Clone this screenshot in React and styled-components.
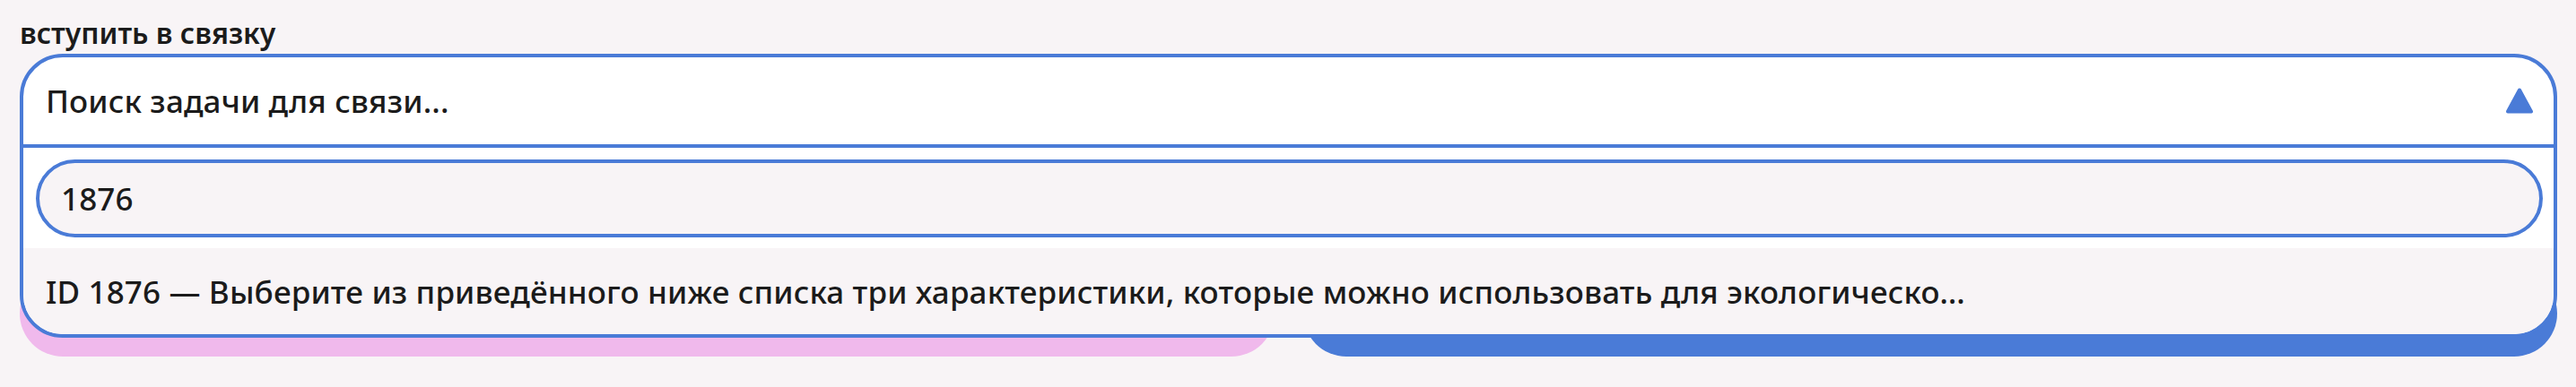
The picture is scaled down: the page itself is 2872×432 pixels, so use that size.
import React from "react";
import styled, { createGlobalStyle } from "styled-components";

const BLUE = "#4a7bd7";
const PINK = "#f0b9ec";
const PAPER = "#f8f4f6";

const GlobalStyle = createGlobalStyle`
  body {
    margin: 0;
    background: ${PAPER};
    color: #1b1b1b;
    font-family: "Noto Sans", "Open Sans", sans-serif;
  }
`;

const Page = styled.div`
  padding: 0 21px 0 22px;
`;

const Label = styled.div`
  padding-top: 18px;
  margin-bottom: 4px;
  font-size: 32px;
  line-height: 38px;
  font-weight: 600;
`;

const Stage = styled.div`
  position: relative;
`;

const ButtonRow = styled.div`
  display: flex;
  gap: 32px;
  padding-top: 242px;
`;

const ActionButton = styled.button`
  flex: 1;
  height: 96px;
  border: none;
  border-radius: 48px;
  background: ${(p) => p.$color};
`;

const Panel = styled.div`
  position: absolute;
  top: 0;
  left: 0;
  right: 0;
  border: 4px solid ${BLUE};
  border-radius: 48px;
  background: #fff;
  overflow: hidden;
  font-size: 35px;
  font-weight: 500;
  letter-spacing: 0.15px;
`;

const Header = styled.div`
  height: 97px;
  display: flex;
  align-items: center;
  justify-content: space-between;
  padding: 0 23px 0 25px;
  border-bottom: 4px solid ${BLUE};
`;

const SearchBox = styled.div`
  padding: 13px 12px 12px 14px;
`;

const SearchInput = styled.input`
  display: block;
  width: 100%;
  height: 87px;
  box-sizing: border-box;
  border: 4px solid ${BLUE};
  border-radius: 44px;
  background: ${PAPER};
  padding: 0 24px;
  font: inherit;
  letter-spacing: inherit;
  color: inherit;
  outline: none;
`;

const Option = styled.div`
  height: 96px;
  display: flex;
  align-items: center;
  padding: 0 25px;
  background: ${PAPER};
  white-space: nowrap;
`;

const Caret = () => (
  <svg width="30" height="29" viewBox="0 0 30 29">
    <polygon
      points="15,2.5 28,26.5 2,26.5"
      fill={BLUE}
      stroke={BLUE}
      strokeWidth="4"
      strokeLinejoin="round"
    />
  </svg>
);

export default function App() {
  return (
    <Page>
      <GlobalStyle />
      <Label>вступить в связку</Label>
      <Stage>
        <ButtonRow>
          <ActionButton $color={PINK} aria-label="отмена" />
          <ActionButton $color={BLUE} aria-label="связать" />
        </ButtonRow>
        <Panel>
          <Header>
            <span>Поиск задачи для связи...</span>
            <Caret />
          </Header>
          <SearchBox>
            <SearchInput defaultValue="1876" />
          </SearchBox>
          <Option>
            ID 1876 — Выберите из приведённого ниже списка три характеристики, которые можно использовать для экологическо…
          </Option>
        </Panel>
      </Stage>
    </Page>
  );
}
